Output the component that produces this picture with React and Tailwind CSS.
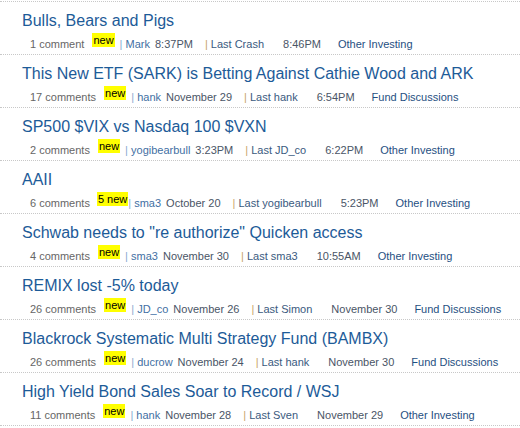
import React from 'react'

const threads = [
  { title: 'Bulls, Bears and Pigs', comments: '1 comment', badge: 'new', user: 'Mark', date: '8:37PM', last: 'Crash', lastDate: '8:46PM', category: 'Other Investing' },
  { title: 'This New ETF (SARK) is Betting Against Cathie Wood and ARK', comments: '17 comments', badge: 'new', user: 'hank', date: 'November 29', last: 'hank', lastDate: '6:54PM', category: 'Fund Discussions' },
  { title: 'SP500 $VIX vs Nasdaq 100 $VXN', comments: '2 comments', badge: 'new', user: 'yogibearbull', date: '3:23PM', last: 'JD_co', lastDate: '6:22PM', category: 'Other Investing' },
  { title: 'AAII', comments: '6 comments', badge: '5 new', user: 'sma3', date: 'October 20', last: 'yogibearbull', lastDate: '5:23PM', category: 'Other Investing' },
  { title: 'Schwab needs to "re authorize" Quicken access', comments: '4 comments', badge: 'new', user: 'sma3', date: 'November 30', last: 'sma3', lastDate: '10:55AM', category: 'Other Investing' },
  { title: 'REMIX lost -5% today', comments: '26 comments', badge: 'new', user: 'JD_co', date: 'November 26', last: 'Simon', lastDate: 'November 30', category: 'Fund Discussions' },
  { title: 'Blackrock Systematic Multi Strategy Fund (BAMBX)', comments: '26 comments', badge: 'new', user: 'ducrow', date: 'November 24', last: 'hank', lastDate: 'November 30', category: 'Fund Discussions' },
  { title: 'High Yield Bond Sales Soar to Record / WSJ', comments: '11 comments', badge: 'new', user: 'hank', date: 'November 28', last: 'Sven', lastDate: 'November 29', category: 'Other Investing' },
]

function ThreadRow({ t }) {
  const wide = t.badge !== 'new'
  return (
    <div className="border-b border-dotted border-[#c8c8c8] pt-[9px] pb-[3px]">
      <div className="pl-[22px] text-[16px] leading-[20px] text-[#1d5b98] whitespace-nowrap">
        {t.title}
      </div>
      <div className="mt-[6px] pl-[30px] flex items-baseline text-[11px] leading-[14px] whitespace-nowrap">
        <span className="text-[#666666]">{t.comments}</span>
        <span
          className={
            wide
              ? 'relative -top-[4px] ml-[7px] bg-[#ffff00] px-[1px] text-black'
              : 'relative -top-[4px] ml-[8px] bg-[#ffff00] px-[1px] text-black'
          }
        >
          {t.badge}
        </span>
        <span className={wide ? 'ml-0 text-[#3f6fa3]' : 'ml-[5px] text-[#3f6fa3]'}>
          <span className="text-[#8aaad0]">|</span> {t.user}
        </span>
        <span className="ml-[5px] text-[#4a5566]">{t.date}</span>
        <span className="ml-[12px] text-[#3a5a80]">
          <span className="text-[#c9a46a]">|</span> Last {t.last}
        </span>
        <span className="ml-[19px] text-[#4a5566]">{t.lastDate}</span>
        <span className="ml-[17px] text-[#1f4f82]">{t.category}</span>
      </div>
    </div>
  )
}

export default function App() {
  return (
    <div className="w-[520px] h-[428px] overflow-hidden bg-white pt-[1px] font-['Liberation_Sans',Arial,sans-serif]">
      <div className="border-t border-dotted border-[#c8c8c8]">
        {threads.map((t, i) => (
          <ThreadRow key={i} t={t} />
        ))}
      </div>
    </div>
  )
}
